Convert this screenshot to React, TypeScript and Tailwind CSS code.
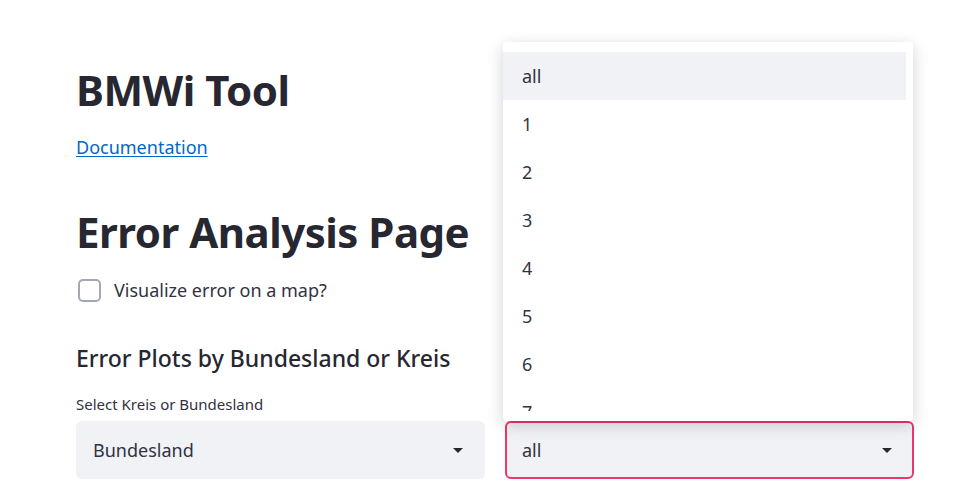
import React from "react"

const font = { fontFamily: '"Noto Sans", "Open Sans", sans-serif' }

function Caret() {
  return (
    <svg width="10" height="5" viewBox="0 0 10 5" className="shrink-0">
      <path d="M0 0 L10 0 L5 5 Z" fill="#262730" />
    </svg>
  )
}

const options = ["all", "1", "2", "3", "4", "5", "6", "7"]

export default function App() {
  return (
    <div className="relative h-[499px] w-[955px] overflow-hidden bg-white text-[#31333f]" style={font}>
      <div className="w-[838px] pl-[76px] box-content pt-[62px]">
        <h1 className="text-[42px] font-bold leading-[56px] text-[#262730] tracking-[-0.5px]">BMWi Tool</h1>
        <a href="#" className="mt-[17px] block text-[18px] leading-[24px] text-[#0068c9] underline underline-offset-2">
          Documentation
        </a>
        <h1 className="mt-[45px] text-[42px] font-bold leading-[56px] text-[#262730] tracking-[-0.5px]">
          Error Analysis Page
        </h1>
        <label className="mt-[18px] flex items-center gap-[13px]">
          <span className="ml-[2px] h-[23px] w-[23px] rounded-[5px] border-2 border-[#a3a8b4] bg-white" />
          <span className="text-[18px] leading-[24px]">Visualize error on a map?</span>
        </label>
        <h3 className="mt-[41px] text-[23px] font-medium leading-[30px] text-[#262730]">
          Error Plots by Bundesland or Kreis
        </h3>
        <div className="mt-[21px] text-[15px] leading-[20px]">Select Kreis or Bundesland</div>
        <div className="mt-[7px] grid grid-cols-2 gap-5">
          <div className="flex h-[58px] items-center justify-between rounded-md bg-[#f0f2f6] pl-[17px] pr-[22px] text-[18px]">
            <span>Bundesland</span>
            <Caret />
          </div>
          <div className="relative">
            <div className="flex h-[58px] items-center justify-between rounded-md border-2 border-[#f0356a] bg-[#f0f2f6] pl-[15px] pr-[20px] text-[18px]">
              <span>all</span>
              <Caret />
            </div>
            <div className="absolute bottom-[58px] left-[-2px] h-[379px] w-[410px] rounded-[4px] bg-white pt-[10px] pb-[10px] pr-[7px] shadow-[0_4px_16px_rgba(0,0,0,0.18)]">
              <div className="h-full overflow-hidden">
                {options.map((o, i) => (
                  <div
                    key={o}
                    className={
                      "flex h-[48px] items-center pl-[19px] text-[18px] " + (i === 0 ? "bg-[#f0f2f6]" : "")
                    }
                  >
                    {o}
                  </div>
                ))}
              </div>
            </div>
          </div>
        </div>
      </div>
    </div>
  )
}
